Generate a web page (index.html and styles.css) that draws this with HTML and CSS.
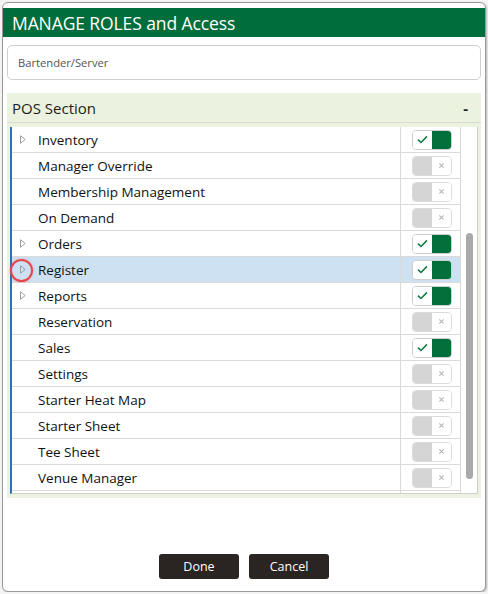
FILE: index.html
```html
<!DOCTYPE html>
<html>
<head>
<meta charset="utf-8">
<link rel="stylesheet" href="styles.css">
</head>
<body>
<div class="dialog">
  <div class="title">MANAGE ROLES and Access</div>
  <div class="input">Bartender/Server</div>
  <div class="panel">
    <div class="panel-head"><span>POS Section</span><span class="minus">-</span></div>
    <div class="list">
      <div class="rows">
        <div class="row"><div class="name"><svg class="tri" viewBox="0 0 6 9"><path d="M0.5 0.7 L5.2 4.5 L0.5 8.3 Z"/></svg>Inventory</div><div class="tcell"><div class="tog on"><span class="a"><svg viewBox="0 0 12 10"><path d="M1 5.2 L4.3 8.3 L11 1.5"/></svg></span><span class="b"></span></div></div></div>
        <div class="row"><div class="name"><span class="sp"></span>Manager Override</div><div class="tcell"><div class="tog off"><span class="a"></span><span class="b"><svg viewBox="0 0 8 8"><path d="M1.5 1.5 L6.5 6.5 M6.5 1.5 L1.5 6.5"/></svg></span></div></div></div>
        <div class="row"><div class="name"><span class="sp"></span>Membership Management</div><div class="tcell"><div class="tog off"><span class="a"></span><span class="b"><svg viewBox="0 0 8 8"><path d="M1.5 1.5 L6.5 6.5 M6.5 1.5 L1.5 6.5"/></svg></span></div></div></div>
        <div class="row"><div class="name"><span class="sp"></span>On Demand</div><div class="tcell"><div class="tog off"><span class="a"></span><span class="b"><svg viewBox="0 0 8 8"><path d="M1.5 1.5 L6.5 6.5 M6.5 1.5 L1.5 6.5"/></svg></span></div></div></div>
        <div class="row"><div class="name"><svg class="tri" viewBox="0 0 6 9"><path d="M0.5 0.7 L5.2 4.5 L0.5 8.3 Z"/></svg>Orders</div><div class="tcell"><div class="tog on"><span class="a"><svg viewBox="0 0 12 10"><path d="M1 5.2 L4.3 8.3 L11 1.5"/></svg></span><span class="b"></span></div></div></div>
        <div class="row sel"><div class="name"><svg class="tri" viewBox="0 0 6 9"><path d="M0.5 0.7 L5.2 4.5 L0.5 8.3 Z"/></svg>Register</div><div class="tcell"><div class="tog on"><span class="a"><svg viewBox="0 0 12 10"><path d="M1 5.2 L4.3 8.3 L11 1.5"/></svg></span><span class="b"></span></div></div></div>
        <div class="row"><div class="name"><svg class="tri" viewBox="0 0 6 9"><path d="M0.5 0.7 L5.2 4.5 L0.5 8.3 Z"/></svg>Reports</div><div class="tcell"><div class="tog on"><span class="a"><svg viewBox="0 0 12 10"><path d="M1 5.2 L4.3 8.3 L11 1.5"/></svg></span><span class="b"></span></div></div></div>
        <div class="row"><div class="name"><span class="sp"></span>Reservation</div><div class="tcell"><div class="tog off"><span class="a"></span><span class="b"><svg viewBox="0 0 8 8"><path d="M1.5 1.5 L6.5 6.5 M6.5 1.5 L1.5 6.5"/></svg></span></div></div></div>
        <div class="row"><div class="name"><span class="sp"></span>Sales</div><div class="tcell"><div class="tog on"><span class="a"><svg viewBox="0 0 12 10"><path d="M1 5.2 L4.3 8.3 L11 1.5"/></svg></span><span class="b"></span></div></div></div>
        <div class="row"><div class="name"><span class="sp"></span>Settings</div><div class="tcell"><div class="tog off"><span class="a"></span><span class="b"><svg viewBox="0 0 8 8"><path d="M1.5 1.5 L6.5 6.5 M6.5 1.5 L1.5 6.5"/></svg></span></div></div></div>
        <div class="row"><div class="name"><span class="sp"></span>Starter Heat Map</div><div class="tcell"><div class="tog off"><span class="a"></span><span class="b"><svg viewBox="0 0 8 8"><path d="M1.5 1.5 L6.5 6.5 M6.5 1.5 L1.5 6.5"/></svg></span></div></div></div>
        <div class="row"><div class="name"><span class="sp"></span>Starter Sheet</div><div class="tcell"><div class="tog off"><span class="a"></span><span class="b"><svg viewBox="0 0 8 8"><path d="M1.5 1.5 L6.5 6.5 M6.5 1.5 L1.5 6.5"/></svg></span></div></div></div>
        <div class="row"><div class="name"><span class="sp"></span>Tee Sheet</div><div class="tcell"><div class="tog off"><span class="a"></span><span class="b"><svg viewBox="0 0 8 8"><path d="M1.5 1.5 L6.5 6.5 M6.5 1.5 L1.5 6.5"/></svg></span></div></div></div>
        <div class="row"><div class="name"><span class="sp"></span>Venue Manager</div><div class="tcell"><div class="tog off"><span class="a"></span><span class="b"><svg viewBox="0 0 8 8"><path d="M1.5 1.5 L6.5 6.5 M6.5 1.5 L1.5 6.5"/></svg></span></div></div></div>
        <div class="row"><div class="name"><span class="sp"></span></div><div class="tcell"><div class="tog on"><span class="a"><svg viewBox="0 0 12 10"><path d="M1 5.2 L4.3 8.3 L11 1.5"/></svg></span><span class="b"></span></div></div></div>
      </div>
      <div class="scrollbar"><div class="thumb"></div></div>
    </div>
  </div>
  <div class="footer">
    <button class="btn">Done</button>
    <button class="btn">Cancel</button>
  </div>
  <div class="marker"></div>
</div>
</body>
</html>
```

FILE: styles.css
```css
html, body {
  margin: 0;
  padding: 0;
  background: #f4f4f4;
  font-family: "Open Sans", "Noto Sans", sans-serif;
}
* {
  box-sizing: border-box;
}
.dialog {
  position: relative;
  margin: 2px 2px 0 2px;
  width: 484px;
  height: 590px;
  background: #fff;
  border: 1px solid #9a9a9a;
  border-radius: 6px;
  box-shadow: 1px 1px 2px rgba(0,0,0,0.25);
  overflow: hidden;
}
.title {
  margin-top: 5px;
  height: 29px;
  background: #006d3c;
  color: #fff;
  font-size: 17.5px;
  line-height: 31px;
  padding-left: 9px;
  letter-spacing: -0.1px;
}
.input {
  margin: 8px 4px 0 4px;
  height: 35px;
  border: 1px solid #cfcfcf;
  border-radius: 5px;
  font-size: 11.2px;
  color: #555;
  line-height: 34px;
  padding-left: 10px;
}
.panel {
  margin: 13px 4px 0 4px;
  height: 405px;
  background: #ebf2df;
  display: flex;
  flex-direction: column;
}
.panel-head {
  height: 30px;
  border-bottom: 1px solid #d8dcd2;
  display: flex;
  justify-content: space-between;
  align-items: center;
  padding: 0 13px 0 5px;
  font-size: 15px;
  color: #1d1d1d;
}
.minus {
  font-weight: bold;
  font-size: 15px;
}
.list {
  margin: 4px 3px 0 3px;
  height: 367px;
  background: #fff;
  border: 1px solid #cfcfcf;
  border-left: 2px solid #2e6fb7;
  border-top: none;
  display: flex;
  overflow: hidden;
}
.rows {
  width: 448px;
  flex: none;
  overflow: hidden;
}
.row {
  height: 26px;
  border-bottom: 1px solid #dadada;
  display: flex;
  font-size: 13.5px;
  color: #111;
}
.row.sel {
  background: #cde1f3;
}
.name {
  flex: 1;
  display: flex;
  align-items: center;
  padding-left: 8px;
}
.tri {
  width: 6px;
  height: 9px;
  margin-right: 12px;
  fill: none;
  stroke: #a0a0a0;
  stroke-width: 1;
}
.sp {
  width: 6px;
  margin-right: 12px;
}
.tcell {
  width: 60px;
  flex: none;
  border-left: 1px solid #dadada;
  display: flex;
  align-items: center;
  padding-left: 11px;
}
.tog {
  width: 40px;
  height: 20px;
  border: 1px solid #cfcfcf;
  border-radius: 4px;
  overflow: hidden;
  display: flex;
}
.tog .a, .tog .b {
  flex: 1;
  display: flex;
  align-items: center;
  justify-content: center;
}
.tog.on .a { background: #fff; }
.tog.on .b { background: #03703c; }
.tog.off { border-color: #dcdcdc; }
.tog.off .a { background: #d5d5d5; }
.tog.off .b { background: #fff; }
.tog.on svg {
  width: 11px;
  height: 9px;
  fill: none;
  stroke: #157a45;
  stroke-width: 1.8;
}
.tog.off svg {
  width: 7px;
  height: 7px;
  fill: none;
  stroke: #b5b5b5;
  stroke-width: 1.2;
}
.scrollbar {
  flex: 1;
  border-left: 1px solid #dadada;
  position: relative;
}
.thumb {
  position: absolute;
  left: 5px;
  top: 106px;
  width: 7px;
  height: 246px;
  border-radius: 4px;
  background: #a9a9a9;
}
.footer {
  margin-top: 56px;
  display: flex;
  justify-content: center;
  gap: 10px;
}
.btn {
  width: 80px;
  height: 25px;
  border: none;
  border-radius: 3px;
  background: #2a2422;
  color: #fff;
  font-family: "Open Sans", "Noto Sans", sans-serif;
  font-size: 12.5px;
  padding: 0;
}
.marker {
  position: absolute;
  left: 7px;
  top: 256px;
  width: 23px;
  height: 23px;
  border: 2px solid #e4464b;
  border-radius: 50%;
  box-shadow: 0 0 2px rgba(228,70,75,0.5);
}
```
